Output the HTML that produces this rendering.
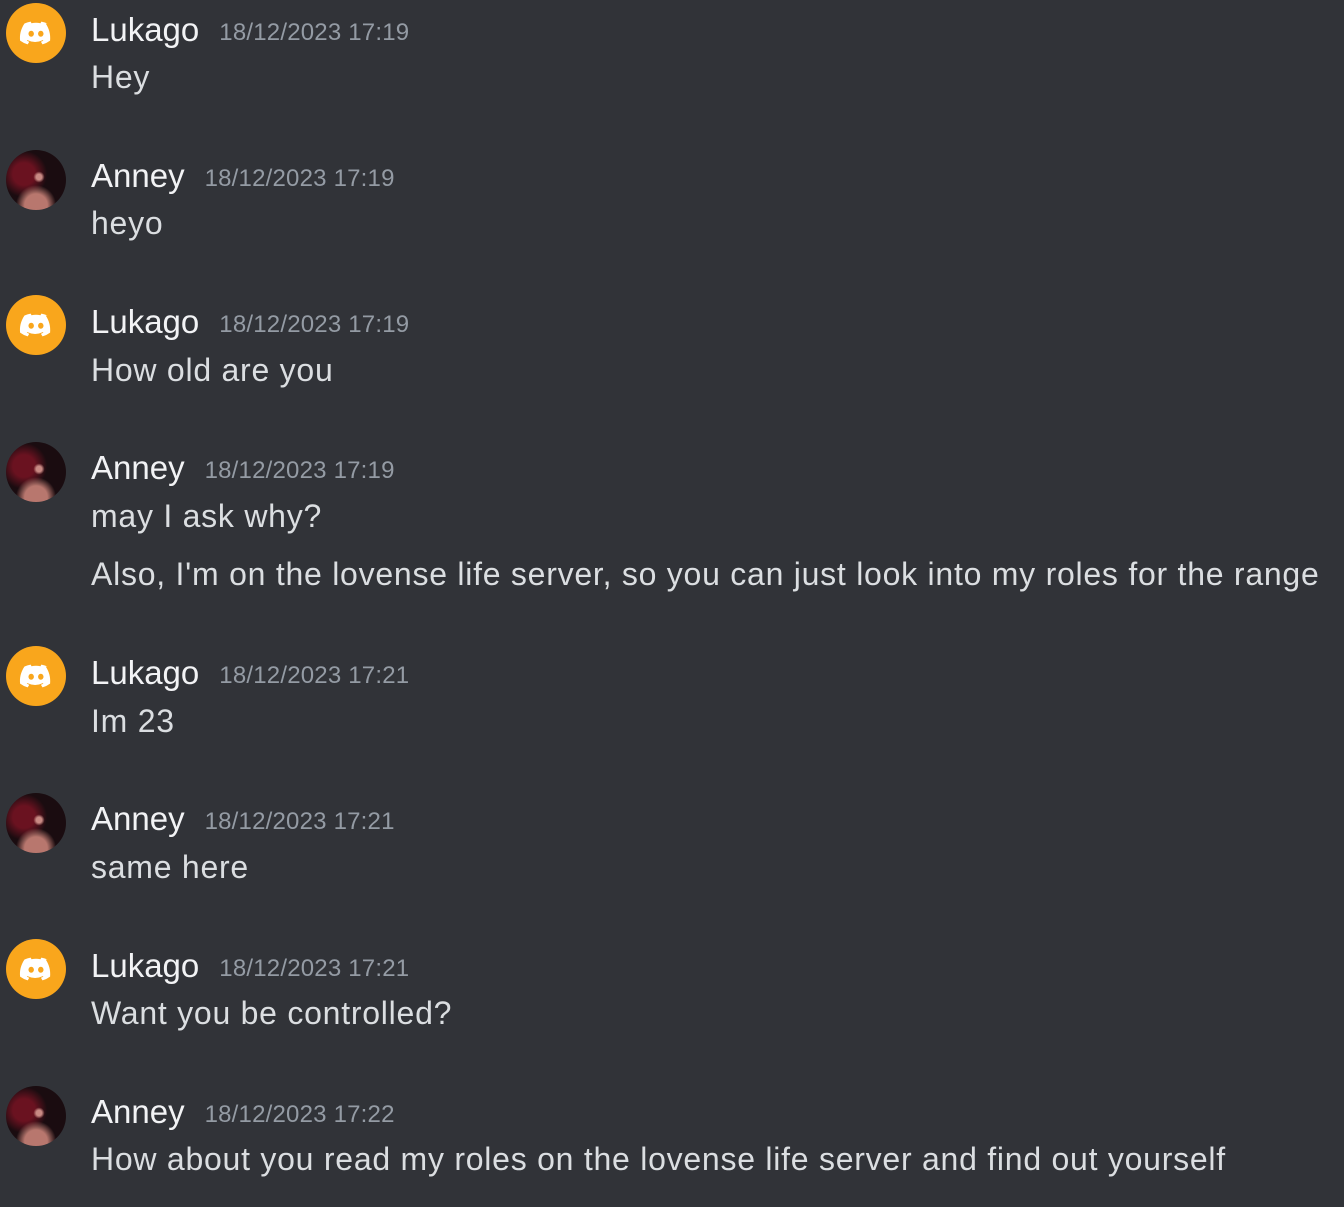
<!DOCTYPE html>
<html><head><meta charset="utf-8"><style>
html,body{margin:0;padding:0;background:#313338;width:1344px;height:1207px;overflow:hidden;font-family:"Liberation Sans",sans-serif;}
.a{position:absolute;left:6px;width:60px;height:60px;border-radius:50%;overflow:hidden}
.l{background:#f9a61c}
.an{background:radial-gradient(circle at 55% 45%,#c98a84 0 6%,transparent 12%),radial-gradient(circle at 50% 92%,#b8776e 0 18%,transparent 32%),radial-gradient(circle at 30% 40%,#6a1220 0 20%,transparent 42%),#1a0c10}
.n{position:absolute;left:91px;height:40px;line-height:40px;font-size:33px;color:#f2f3f5;white-space:nowrap}
.n span{font-size:24px;color:#949ba4;margin-left:20px;vertical-align:1px;letter-spacing:0.2px}
.m{position:absolute;left:91px;height:40px;line-height:40px;font-size:32px;letter-spacing:0.75px;color:#dbdee1;white-space:nowrap}
</style></head><body>
<svg width="0" height="0" style="position:absolute"><defs><symbol id="d" viewBox="0 0 60 60"><path fill="#fff" d="M41.5 20.5a25 25 0 0 0-6.2-1.9l-.8 1.6a23 23 0 0 0-9 0l-.8-1.6a25 25 0 0 0-6.2 1.9c-3.9 5.8-5 11.5-4.4 17.1a25 25 0 0 0 7.6 3.8l1.6-2.6a16 16 0 0 1-2.5-1.2l.6-.5a17.8 17.8 0 0 0 15.4 0l.6.5a16 16 0 0 1-2.5 1.2l1.6 2.6a25 25 0 0 0 7.6-3.8c.6-6.5-1.100-12.2-4.4-17.1zM25.2 33.7c-1.5 0-2.7-1.4-2.7-3s1.2-3 2.7-3 2.7 1.4 2.7 3-1.2 3-2.7 3zm9.6 0c-1.5 0-2.7-1.4-2.7-3s1.2-3 2.7-3 2.7 1.4 2.7 3-1.2 3-2.7 3z"/></symbol></defs></svg>

<div class="a l" style="top:3px"><svg width="60" height="60"><use href="#d"/></svg></div>
<div class="n" style="top:10px">Lukago<span>18/12/2023 17:19</span></div>
<div class="m" style="top:57px">Hey</div>

<div class="a an" style="top:150px"></div>
<div class="n" style="top:156px">Anney<span>18/12/2023 17:19</span></div>
<div class="m" style="top:203px">heyo</div>

<div class="a l" style="top:295px"><svg width="60" height="60"><use href="#d"/></svg></div>
<div class="n" style="top:302px">Lukago<span>18/12/2023 17:19</span></div>
<div class="m" style="top:350px">How old are you</div>

<div class="a an" style="top:442px"></div>
<div class="n" style="top:448px">Anney<span>18/12/2023 17:19</span></div>
<div class="m" style="top:496px">may I ask why?</div>
<div class="m" style="top:554px">Also, I'm on the lovense life server, so you can just look into my roles for the range</div>

<div class="a l" style="top:646px"><svg width="60" height="60"><use href="#d"/></svg></div>
<div class="n" style="top:653px">Lukago<span>18/12/2023 17:21</span></div>
<div class="m" style="top:701px">Im 23</div>

<div class="a an" style="top:793px"></div>
<div class="n" style="top:799px">Anney<span>18/12/2023 17:21</span></div>
<div class="m" style="top:847px">same here</div>

<div class="a l" style="top:939px"><svg width="60" height="60"><use href="#d"/></svg></div>
<div class="n" style="top:946px">Lukago<span>18/12/2023 17:21</span></div>
<div class="m" style="top:993px">Want you be controlled?</div>

<div class="a an" style="top:1086px"></div>
<div class="n" style="top:1092px">Anney<span>18/12/2023 17:22</span></div>
<div class="m" style="top:1139px">How about you read my roles on the lovense life server and find out yourself</div>
</body></html>
